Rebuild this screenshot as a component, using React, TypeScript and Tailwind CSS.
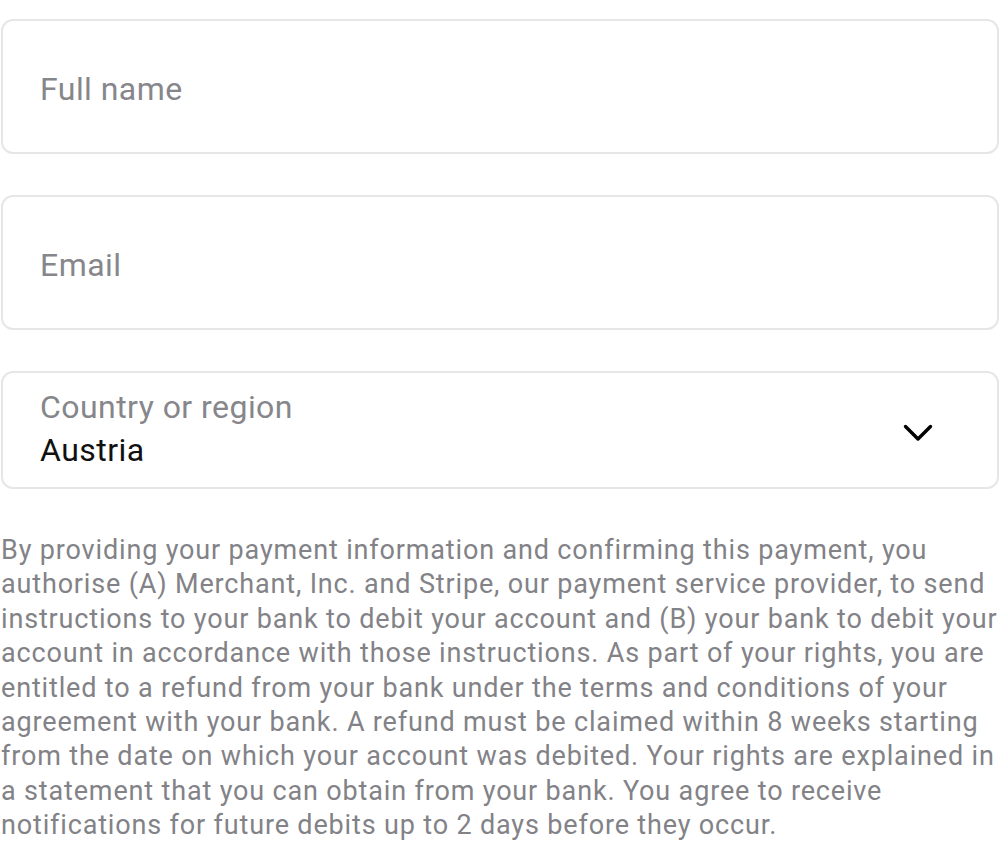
function TextField({ placeholder }: { placeholder: string }) {
  return (
    <div className="h-[135px] rounded-[12px] border-2 border-[#e6e6e8] bg-white flex items-center pl-[37px] pt-[5px]">
      <span className="text-[32px] tracking-[0.45px] text-[#86868b]">{placeholder}</span>
    </div>
  );
}

export default function App() {
  return (
    <div className="min-h-screen bg-white pt-[19px] font-['Roboto',sans-serif]">
      <div className="flex flex-col gap-[41px] px-[1px]">
        <TextField placeholder="Full name" />
        <TextField placeholder="Email" />
        <div className="h-[118px] rounded-[12px] border-2 border-[#e6e6e8] bg-white flex items-center pl-[37px] pr-[64px]">
          <div className="flex-1 flex flex-col pt-[1px]">
            <span className="text-[32px] leading-[38px] tracking-[0.45px] text-[#86868b]">Country or region</span>
            <span className="text-[32px] leading-[48px] tracking-[0.45px] text-[#111111]">Austria</span>
          </div>
          <svg className="mt-[6px]" width="30" height="18" viewBox="0 0 30 18" fill="none">
            <polyline
              points="2.5,2.5 15,15 27.5,2.5"
              stroke="#000"
              strokeWidth="3.4"
              strokeLinecap="round"
              strokeLinejoin="round"
            />
          </svg>
        </div>
      </div>
      <p className="mt-[44px] pl-[1px] text-[27px] leading-[34.4px] tracking-[0.84px] text-[#828287]">
        By providing your payment information and confirming this payment, you authorise (A) Merchant, Inc. and
        Stripe, our payment service provider, to send instructions to your bank to debit your account and (B) your
        bank to debit your account in accordance with those instructions. As part of your rights, you are entitled to
        a refund from your bank under the terms and conditions of your agreement with your bank. A refund must be
        claimed within 8 weeks starting from the date on which your account was debited. Your rights are explained in
        a statement that you can obtain from your bank. You agree to receive notifications for future debits up to 2
        days before they occur.
      </p>
    </div>
  );
}
